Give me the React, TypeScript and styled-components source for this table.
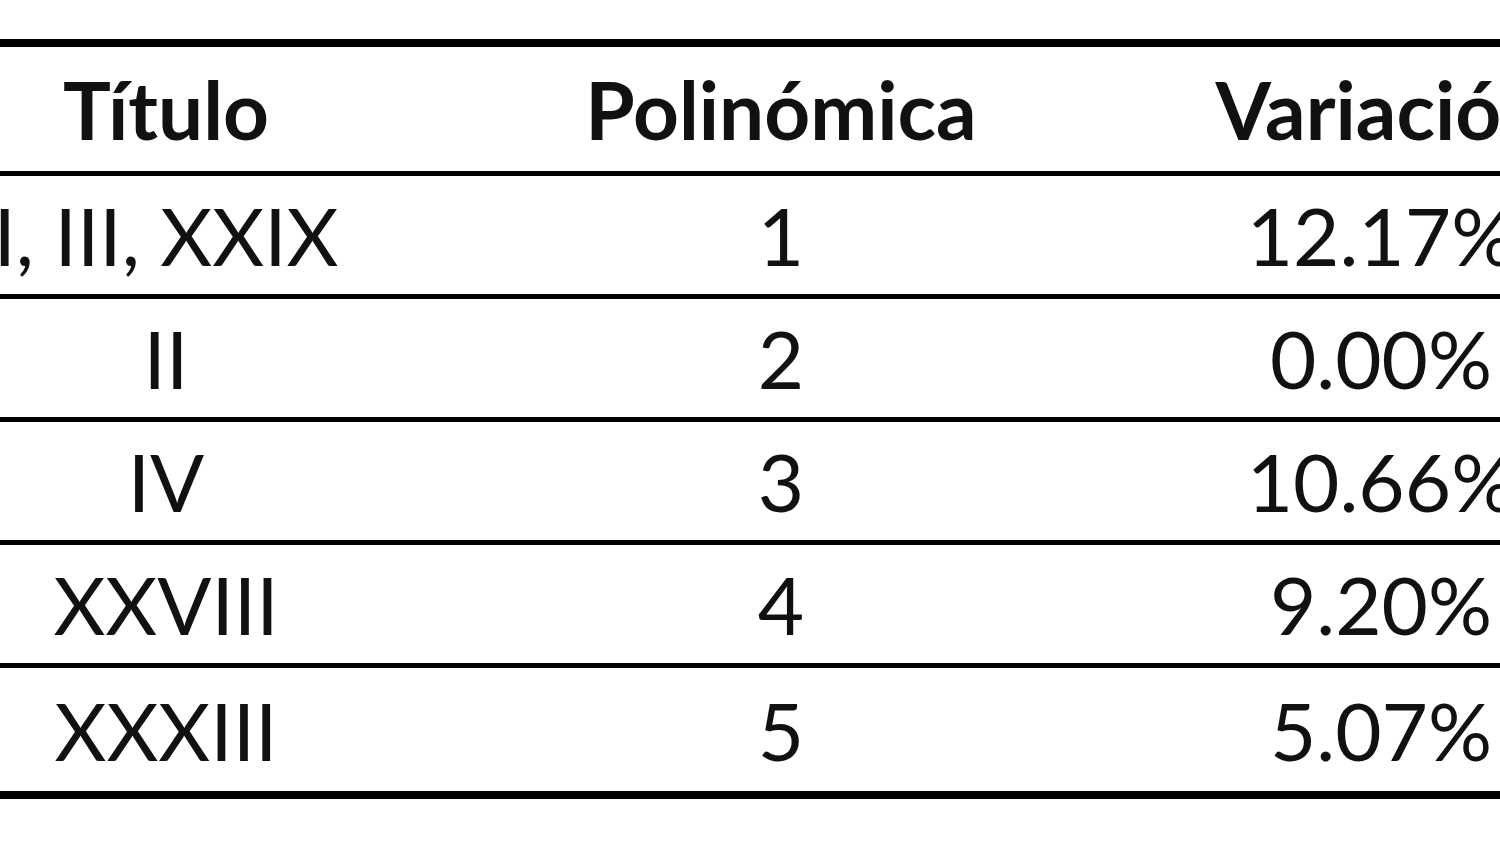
import React from 'react';
import styled, { createGlobalStyle } from 'styled-components';

const GlobalStyle = createGlobalStyle`
  html, body {
    margin: 0;
    padding: 0;
    background: #ffffff;
    overflow: hidden;
  }
  body {
    font-family: Lato, "Open Sans", "Noto Sans", sans-serif;
    color: #111111;
  }
`;

const Page = styled.div`
  width: 1500px;
  height: 843px;
  overflow: hidden;
  background: #ffffff;
`;

const Table = styled.div`
  margin: 39px 0 0 -144px;
  width: 1820px;
  border-top: 8px solid #000000;
  border-bottom: 8px solid #000000;
`;

const HeaderRow = styled.div`
  display: grid;
  grid-template-columns: 620px 610px 590px;
  height: 124px;
  border-bottom: 5px solid #000000;
`;

const Row = styled.div`
  display: grid;
  grid-template-columns: 620px 610px 590px;
  height: 118px;
  border-bottom: 5px solid #000000;

  &:last-child {
    height: 123px;
    border-bottom: none;
  }
`;

const HeadCell = styled.div`
  display: flex;
  align-items: center;
  justify-content: center;
  font-size: 80px;
  font-weight: 700;
  white-space: nowrap;
`;

const Cell = styled.div`
  display: flex;
  align-items: center;
  justify-content: center;
  font-size: 80px;
  font-weight: 400;
  white-space: nowrap;
`;

const rows = [
  { titulo: 'I, III, XXIX', poly: '1', variacion: '12.17%' },
  { titulo: 'II', poly: '2', variacion: '0.00%' },
  { titulo: 'IV', poly: '3', variacion: '10.66%' },
  { titulo: 'XXVIII', poly: '4', variacion: '9.20%' },
  { titulo: 'XXXIII', poly: '5', variacion: '5.07%' },
];

const App: React.FC = () => {
  return (
    <Page>
      <GlobalStyle />
      <Table>
        <HeaderRow>
          <HeadCell>Título</HeadCell>
          <HeadCell>Polinómica</HeadCell>
          <HeadCell>Variación</HeadCell>
        </HeaderRow>
        {rows.map((r) => (
          <Row key={r.poly}>
            <Cell>{r.titulo}</Cell>
            <Cell>{r.poly}</Cell>
            <Cell>{r.variacion}</Cell>
          </Row>
        ))}
      </Table>
    </Page>
  );
};

export default App;
